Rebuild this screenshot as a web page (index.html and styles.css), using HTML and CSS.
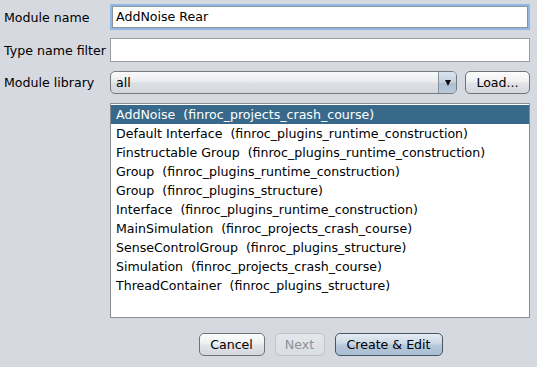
FILE: index.html
```html
<!DOCTYPE html>
<html lang="en">
  <head>
    <meta charset="UTF-8" />
    <title>Create Module</title>
    <link rel="stylesheet" href="styles.css">
  </head>
  <body>
    <div class="dialog">
      <!-- form rows -->
      <div class="row row-name">
        <label class="label">Module name</label>
        <div class="field focused">AddNoise Rear</div>
      </div>
      <div class="row row-filter">
        <label class="label">Type name filter</label>
        <div class="field"></div>
      </div>
      <div class="row row-lib">
        <label class="label">Module library</label>
        <div class="combo">
          <span class="combo-text">all</span>
          <span class="combo-arrow"><span class="tri"></span></span>
        </div>
        <div class="btn load">Load...</div>
      </div>

      <!-- module list -->
      <div class="row row-list">
        <div class="label"></div>
        <ul class="list">
          <li class="selected">AddNoise&nbsp; (finroc_projects_crash_course)</li>
          <li>Default Interface&nbsp; (finroc_plugins_runtime_construction)</li>
          <li>Finstructable Group&nbsp; (finroc_plugins_runtime_construction)</li>
          <li>Group&nbsp; (finroc_plugins_runtime_construction)</li>
          <li>Group&nbsp; (finroc_plugins_structure)</li>
          <li>Interface&nbsp; (finroc_plugins_runtime_construction)</li>
          <li>MainSimulation&nbsp; (finroc_projects_crash_course)</li>
          <li>SenseControlGroup&nbsp; (finroc_plugins_structure)</li>
          <li>Simulation&nbsp; (finroc_projects_crash_course)</li>
          <li>ThreadContainer&nbsp; (finroc_plugins_structure)</li>
        </ul>
      </div>

      <!-- bottom buttons -->
      <div class="buttons">
        <div class="btn cancel">Cancel</div>
        <div class="btn next disabled">Next</div>
        <div class="btn create">Create &amp; Edit</div>
      </div>
    </div>
  </body>
</html>
```

FILE: styles.css
```css
html, body {
  margin: 0;
  padding: 0;
  background: #d6d9df;
}
body {
  font-family: "DejaVu Sans", sans-serif;
  font-size: 12.6px;
  color: #000;
}
.dialog {
  width: 537px;
  height: 367px;
  padding: 4px 7px 0 4px;
  box-sizing: border-box;
}
.row {
  display: flex;
  align-items: center;
}
.label {
  width: 106px;
  flex: none;
}
.row-name {
  height: 26px;
}
.row-filter {
  height: 24px;
  margin-top: 8px;
}
.row-lib {
  height: 23px;
  margin-top: 9px;
}
.row-list {
  margin-top: 9px;
  align-items: stretch;
}

/* text fields */
.field {
  flex: 1;
  height: 100%;
  box-sizing: border-box;
  background: #fff;
  border: 1px solid #9a9da2;
  padding: 0 5px;
  line-height: 22px;
}
.field.focused {
  border: 2px solid #8fb9e3;
  box-shadow: inset 0 0 0 1px #8d9298;
  padding: 0 4px;
  line-height: 22px;
}

/* combo box */
.combo {
  flex: 1;
  display: flex;
  height: 100%;
  box-sizing: border-box;
  border: 1px solid #767b82;
  border-radius: 5px;
  background: linear-gradient(#fbfbfc, #e9ebee 45%, #dcdfe4 55%, #d3d6dc);
  overflow: hidden;
}
.combo-text {
  flex: 1;
  padding-left: 5px;
  line-height: 21px;
}
.combo-arrow {
  width: 17px;
  border-left: 1px solid #8a949e;
  background: linear-gradient(#dbe4ee, #c2d0de 50%, #aebfd1 55%, #b9c9d9);
  display: flex;
  align-items: center;
  justify-content: center;
}
.tri {
  width: 0;
  height: 0;
  border-left: 3.5px solid transparent;
  border-right: 3.5px solid transparent;
  border-top: 6px solid #111;
}

/* buttons */
.btn {
  box-sizing: border-box;
  height: 23px;
  border: 1px solid #6e737a;
  border-radius: 5px;
  background: linear-gradient(#fdfdfd, #eef0f2 45%, #e1e3e7 55%, #d4d7dc);
  text-align: center;
  line-height: 21px;
}
.load {
  width: 65px;
  margin-left: 8px;
  flex: none;
}

/* list */
.list {
  flex: 1;
  height: 215px;
  margin: 0;
  padding: 1px 0 0;
  list-style: none;
  box-sizing: border-box;
  background: #fff;
  border: 1px solid #8a8e94;
}
.list li {
  height: 19px;
  line-height: 19px;
  padding-left: 5px;
  white-space: nowrap;
}
.list li.selected {
  background: #39698a;
  color: #fff;
}

.buttons {
  display: flex;
  justify-content: center;
  gap: 10px;
  margin-top: 15px;
  padding-left: 107px;
}
.cancel {
  width: 66px;
}
.next {
  width: 50px;
}
.next.disabled {
  color: #8e9196;
  border-color: #bfc3c8;
  background: linear-gradient(#e4e6ea, #dadde2);
}
.create {
  width: 108px;
  border-color: #4a5563;
  background: linear-gradient(#e5ecf3, #cbd8e5 45%, #b6c8da 55%, #a9bdd2);
}
```
